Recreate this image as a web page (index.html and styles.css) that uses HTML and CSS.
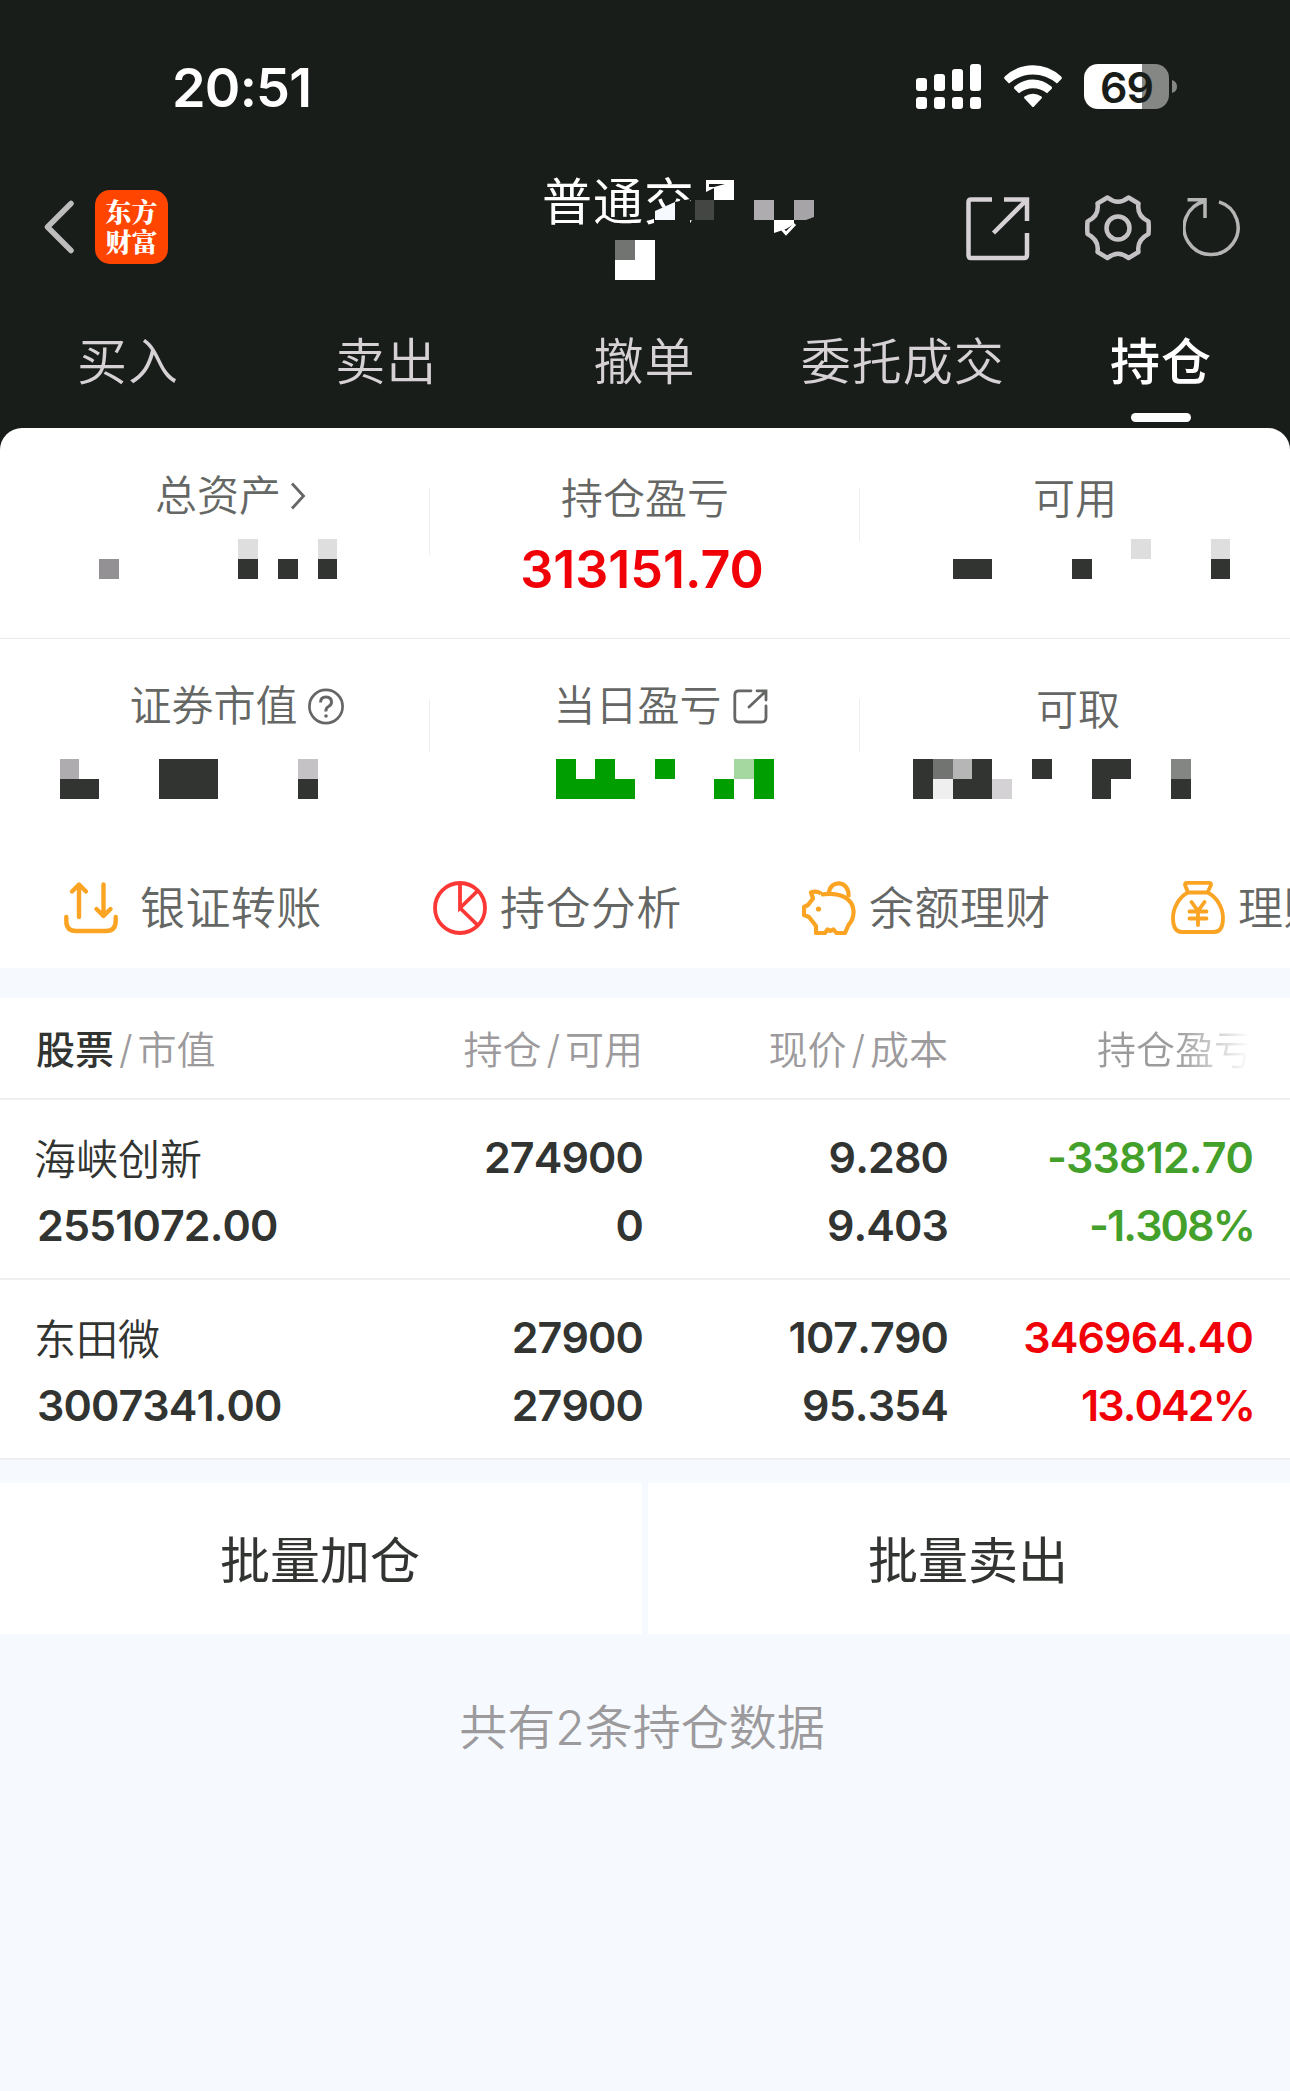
FILE: index.html
```html
<!DOCTYPE html>
<html lang="zh-CN">
<head>
<meta charset="utf-8">
<title>持仓</title>
<link rel="stylesheet" href="styles.css">
</head>
<body>
<header class="top">
  <div class="status">
    <span class="clock">20:51</span>
    <div class="status-icons">
      <svg width="65" height="45" viewBox="0 0 65 45" fill="#fff"><rect x="0" y="14" width="11" height="13" rx="3"/><rect x="18" y="10" width="11" height="17" rx="3"/><rect x="36" y="5" width="11" height="22" rx="3"/><rect x="54" y="0" width="11" height="27" rx="3"/><rect x="0" y="33" width="11" height="12" rx="3"/><rect x="18" y="33" width="11" height="12" rx="3"/><rect x="36" y="33" width="11" height="12" rx="3"/><rect x="54" y="33" width="11" height="12" rx="3"/></svg>
      <svg class="wifi" width="58" height="45" viewBox="0 0 58 45" fill="#fff"><path d="M.8 12.500Q13 1.200 29 1.200T57.200 12.500Q58.500 14 57.200 15.200L53 19.400Q42 10.400 29 10.400T5 19.400L.8 15.200Q-.5 14 .8 12.500Z"/><path d="M10.500 22.500Q19 15.400 29 15.400T47.500 22.500Q48.500 24 47.500 25L43 29.300Q36.500 24.300 29 24.300T15 29.300L10.500 25Q9.500 24 10.500 22.500Z"/><path d="M20.500 32.500Q24.500 29.700 29 29.700T37.500 32.500Q38.500 33.500 37.500 34.500L30 42.500Q29 43.500 28 42.500L20.500 34.500Q19.500 33.500 20.500 32.500Z"/></svg>
      <div class="battery"><span>69</span></div>
      <svg width="7" height="45" viewBox="0 0 7 45"><path d="M1 16Q6 17.500 6 22.500T1 29Z" fill="#848784"/></svg>
    </div>
  </div>
  <div class="nav">
    <svg width="30" height="54" viewBox="0 0 30 54" fill="none" stroke="#bdbdbd" stroke-width="5.500" stroke-linecap="round" stroke-linejoin="round"><path d="M27 3.500L3.500 27 27 50.500"/></svg>
    <div class="logo">东方<br>财富</div>
    <div class="title">普通交
      <svg class="title-mask" width="280" height="140" viewBox="500 160 280 140" >
        <path d="M654 212L675 202 690 199V230H654Z" fill="#191d1a"/>
        <path d="M655 211L675 202V220H655Z" fill="#f6faff"/>
        <path d="M695 200H714V220H695Z" fill="#434643"/>
        <path d="M706 180H734V200H714V188L706 192Z" fill="#fff"/><path d="M709 184H725L714 187H709Z" fill="#191d1a"/>
        <path d="M754 200H774V220H754Z" fill="#aeacaf"/>
        <path d="M615 240H655V280H615Z" fill="#fff"/><path d="M615 240H635V260H615Z" fill="#727472"/>
      </svg>
      <svg class="title-mask2" width="42" height="40" viewBox="773 200 42 40"><path d="M794 200H814V217L806 220H794Z" fill="#a6a4a7"/><path d="M774 220H794V224L786 229 774 233Z" fill="#fff"/><path d="M782 229L786 233.500 795 224" fill="none" stroke="#fff" stroke-width="3"/></svg>
    </div>
    <div class="tools">
      <svg width="64" height="64" viewBox="0 0 64 64" fill="none" stroke="#d5d1d5" stroke-width="4.500"><path d="M26 2.500H5Q2.500 2.500 2.500 5V58Q2.500 61 5 61H58Q61 61 61 58V36M38 2.500H61V24M60 3.500L27.500 36"/></svg>
      <svg class="gear" width="66" height="66" viewBox="0 0 66 66" fill="none" stroke="#c5c2c5" stroke-width="4.500" stroke-linejoin="round"><circle cx="33" cy="33" r="11.500"/><path d="M22.500 2.500Q33 11 43.500 2.500L53.500 8.500Q51.500 21 63.500 26.500Q64 33 63.500 39Q51.500 45 53.500 57L43.500 63Q33 54.500 22.500 63L12.500 57Q14.500 45 2.500 39Q2 33 2.500 26.500Q14.500 21 12.500 8.500Z"/></svg>
      <svg width="60" height="60" viewBox="0 0 60 60" fill="none" stroke="#b5b5b5" stroke-width="3.500"><path d="M36 4.800A27 27 0 1 1 22 4.300M4.500 2.800H22V21"/></svg>
    </div>
  </div>
  <nav class="tabs"><span>买入</span><span>卖出</span><span>撤单</span><span>委托成交</span><span class="on">持仓</span></nav>
</header>

<section class="card">
  <div class="cells">
    <div class="cell tall"><div class="label up linked">总资产<svg class="chev" width="16" height="28" viewBox="0 0 16 28" fill="none" stroke="#656765" stroke-width="2.800"><path d="M2 1.500L13.500 14 2 26.500"/></svg></div>
      <svg class="mosaic" viewBox="0 539 430 40" fill="#313431"><path fill="#949194" d="M99 559h20v20h-20z"/><path fill="#dedede" d="M238 539h20v20h-20zM318 539h19v20h-19z"/><path d="M238 559h20v20h-20zM278 559h20v20h-20zM318 559h19v20h-19z"/></svg></div>
    <div class="cell"><div class="label">持仓盈亏</div><div class="total">313151.70</div></div>
    <div class="cell"><div class="label">可用</div>
      <svg class="mosaic" viewBox="860 539 430 40" fill="#313431"><path d="M953 559h39v20h-39zM1072 559h20v20h-20zM1211 559h19v20h-19z"/><path fill="#dedede" d="M1131 539h20v20h-20zM1211 539h19v20h-19z"/></svg></div>
  </div>
  <div class="cells second">
    <div class="cell"><div class="label up shift">证券市值<svg class="help" width="36" height="37" viewBox="0 0 36 37" fill="none" stroke="#656765" stroke-width="2.700"><circle cx="18" cy="18.500" r="16.600"/><path d="M12.500 14.500Q12.500 9 18 9T23.500 14Q23.500 17 20.500 18.500T18 23.500" stroke-width="3"/><circle cx="18" cy="28" r="1.800" fill="#656765" stroke="none"/></svg></div>
      <svg class="mosaic" viewBox="0 759 430 40" fill="#313431"><path fill="#aeacaf" d="M60 759h19v20h-19z"/><path d="M60 779h39v20h-39zM159 759h59v40h-59zM298 779h20v20h-20z"/><path fill="#c5c2c5" d="M298 759h20v20h-20z"/></svg></div>
    <div class="cell"><div class="label up linked">当日盈亏<svg class="ext" width="35" height="35" viewBox="0 0 35 35" fill="none" stroke="#656765" stroke-width="2.800" stroke-linecap="round"><path d="M18 1.800H6Q1.800 1.800 1.800 6V28.500Q1.800 33 6 33H28.500Q33 33 33 28.500V17M24 1.800H33V11M33 2L16 18"/></svg></div>
      <svg class="mosaic" viewBox="430 759 430 40" fill="#009e00"><path d="M556 759h20v20h19v-20h20v20h20v20h-79zM655 759h20v20h-20zM714 779h20v20h-20zM754 759h20v40h-20z"/><path fill="#a5d8a0" d="M734 759h20v20h-20z"/></svg></div>
    <div class="cell"><div class="label low">可取</div>
      <svg class="mosaic" viewBox="860 759 430 40" fill="#313431"><path d="M913 759h20v40h-20zM953 779h19v-20h20v40h-39zM1032 759h20v20h-20zM1092 759h39v20h-20v20h-19zM1171 779h20v20h-20z"/><path fill="#727472" d="M933 759h20v20h-20z"/><path fill="#b6b6b6" d="M953 759h19v20h-19z"/><path fill="#efefef" d="M933 779h20v20h-20z"/><path fill="#d5d2d5" d="M992 779h20v20h-20z"/><path fill="#848684" d="M1171 759h20v20h-20z"/></svg></div>
  </div>
  <div class="actions">
    <div class="action wide"><svg width="54" height="54" viewBox="0 0 54 54" fill="none" stroke="#fba423" stroke-width="4.400" stroke-linecap="round" stroke-linejoin="round"><path d="M2.300 36V40Q2.300 50 12 50H42Q51.700 50 51.700 40V36M15 36V4M8 10.500L15 3.500 22 10.500M39.500 3.500V34M32.500 28L39.500 35 46.500 28"/></svg>银证转账</div>
    <div class="action"><svg width="54" height="54" viewBox="0 0 54 54" fill="none" stroke="#fb3835" stroke-width="3.800"><circle cx="27" cy="27" r="25"/><path d="M27 2V27L45 9.500M27 27L45 44.500"/></svg>持仓分析</div>
    <div class="action"><svg width="54" height="54" viewBox="0 0 54 54" fill="none" stroke="#fba423" stroke-width="4.200" stroke-linejoin="round"><path d="M27 12.500C27 -1.500 48 -1.500 46.500 16M19 12.500Q14 9.500 9 11.500L11 17.500 6 24 2 26V34L7 36 14 45V52H23L25.500 48.500 28 50 31.500 48.500 34.500 52H43L46.500 44Q52 38 51.500 30C51 18 39 10.500 19 13.500"/><circle cx="16.500" cy="28" r="2.600" fill="#fba423" stroke="none"/></svg>余额理财</div>
    <div class="action"><svg width="54" height="54" viewBox="0 0 54 54" fill="none" stroke="#fba423" stroke-width="3.800" stroke-linejoin="round" stroke-linecap="round"><path d="M17 11.500L14 4Q14 1.800 16 1.800H38Q40 1.800 40 4L36.500 11.500ZM17 11.500C8 16 2 27 2 37Q2 51 11 51H43Q52 51 52 37C52 27 46 16 36.500 11.500M20.500 21L27 30 33.500 21M18.500 30.500H35.500M18.500 37.500H35.500M27 30V44"/></svg>理财</div>
  </div>
</section>

<section class="table">
  <div class="row head"><div><b>股票</b><i>/</i>市值</div><div>持仓<i>/</i>可用</div><div>现价<i>/</i>成本</div><div class="fade">持仓盈亏</div></div>
  <div class="row"><div><span class="name">海峡创新</span><span>2551072.00</span></div><div><span>274900</span><span>0</span></div><div><span>9.280</span><span>9.403</span></div><div class="green"><span>-33812.70</span><span class="pct">-1.308%</span></div></div>
  <div class="row"><div><span class="name">东田微</span><span>3007341.00</span></div><div><span>27900</span><span>27900</span></div><div><span>107.790</span><span>95.354</span></div><div class="red"><span>346964.40</span><span class="pct">13.042%</span></div></div>
</section>
<div class="buttons"><div>批量加仓</div><div>批量卖出</div></div>
<p class="foot">共有2条持仓数据</p>
</body>
</html>
```
FILE: styles.css
```css
* { box-sizing: border-box; }
body { margin: 0; width: 1290px; min-height: 2091px; background: #f6faff; font-family: "Inter", "Noto Sans CJK SC", sans-serif; color: #313431; overflow-x: hidden; }
svg { display: block; flex: none; }
.top { background: #191d1a; height: 450px; color: #fff; }
.status { height: 174px; padding: 57px 112px 0 172px; display: flex; justify-content: space-between; }
.clock { padding-top: 1px; font-size: 54px; line-height: 60px; font-weight: 600; letter-spacing: -.8px; }
.status-icons { display: flex; padding-top: 7px; }
.wifi { margin: 0 22px 0 23px; }
.battery { width: 85px; height: 45px; margin-right: 2px; border-radius: 14px; background: linear-gradient(90deg, #fff 58px, #848784 58px); color: #191d1a; font-size: 43px; line-height: 46px; font-weight: 600; text-align: center; letter-spacing: -1px; }
.nav { height: 126px; display: flex; padding-left: 44px; }
.nav > svg { margin-top: 26px; }
.logo { width: 73px; height: 74px; margin: 16px 0 0 21px; padding-top: 6px; border-radius: 15px; background: #ff4500; text-align: center; font-family: "Noto Serif CJK SC", "Noto Sans CJK SC", sans-serif; font-weight: 900; font-size: 26px; line-height: 30px; }
.title { position: relative; margin-left: 374px; width: 424px; font-size: 50px; line-height: 56px; font-weight: 400; letter-spacing: 1px; white-space: nowrap; }
.title-mask { position: absolute; left: -42px; top: -14px; }
.title-mask2 { position: absolute; left: 231px; top: 26px; }
.tools { display: flex; padding-top: 23px; }
.gear { margin: -2px 32px 0 55px; }
.tabs { display: grid; grid-template-columns: repeat(5, 1fr); height: 128px; padding-top: 30px; font-size: 50px; line-height: 64px; font-weight: 350; letter-spacing: 1px; color: #d5d1d5; text-align: center; margin-left: -1px; }
.tabs .on { color: #fff; font-weight: 500; }
.tabs .on::after { content: ""; display: block; width: 60px; height: 9px; margin: 19px auto 0; border-radius: 5px; background: #fff; }
.card { position: relative; margin-top: -22px; height: 540px; background: #fff; border-radius: 22px 22px 0 0; overflow: hidden; }
.cells { display: grid; grid-template-columns: repeat(3, 430px); height: 211px; border-bottom: 1px solid #ebebeb; }
.second { border: 0; }
.cell { display: flex; flex-direction: column; background: linear-gradient(#eee, #eee) right 60px / 1px 53px no-repeat; padding-top: 50px; height: 190px; }
.tall { background-size: 1px 67px; }
.cell:last-child { background: none; }
.label { flex: none; display: flex; justify-content: center; align-items: center; height: 41px; margin-bottom: -1px; font-size: 42px; line-height: 40px; font-weight: 350; color: #656765; }
.up { height: 36px; margin-bottom: 4px; }
.second .up { height: 34px; margin-bottom: 6px; }
.low { padding-left: 6px; }
.chev { margin-left: 9px; }
.help { margin-left: 10px; }
.ext { margin-left: 11px; }
.shift { padding-left: 43px; }
.linked { padding-left: 31px; }
.mosaic { width: 430px; height: 40px; margin-top: 21px; }
.second .mosaic { margin-top: 30px; }
.total { margin-top: 22px; color: #f10008; font-size: 52px; line-height: 60px; font-weight: 600; text-align: center; padding-right: 6px; }
.actions { display: flex; height: 118px; padding: 31px 0 0 64px; }
.action { width: 369px; flex: none; display: flex; gap: 13px; font-size: 45px; line-height: 56px; font-weight: 350; letter-spacing: .4px; color: #656765; white-space: nowrap; }
.wide { gap: 22px; }
.table { margin-top: 30px; background: #fff; }
.row { display: grid; grid-template-columns: 341px 265px 305px 305px; padding: 23px 37px 0 37px; height: 180px; border-bottom: 2px solid #efefef; font-size: 43px; line-height: 68px; font-weight: 600; letter-spacing: -.9px; font-kerning: none; text-align: right; }
.row > div:first-child { text-align: left; }
.row span { display: block; }
.row .name { margin-left: -3px; padding-top: 3px; margin-bottom: -3px; font-size: 42px; font-weight: 350; letter-spacing: 0; }
.row .pct { letter-spacing: -1.9px; margin-right: -1px; }
.head { height: 102px; padding-top: 22px; font-size: 39px; line-height: 60px; font-weight: 350; letter-spacing: 0; color: #9c9a9c; }
.head b { font-weight: 500; color: #313431; margin-left: -1px; }
.head i { font-style: normal; margin: 0 5px; }
.fade { background: linear-gradient(90deg, #9c9a9c 75%, #fff 99%); -webkit-background-clip: text; background-clip: text; color: transparent; }
.green { color: #43a02a; }
.red { color: #f10008; }
.buttons { display: grid; grid-template-columns: 1fr 1fr; gap: 6px; margin-top: 23px; }
.buttons div { height: 151px; background: #fff; font-size: 50px; line-height: 156px; text-align: center; padding-right: 2px; }
.foot { margin: 61px 6px 0 0; font-size: 48px; line-height: 66px; font-weight: 350; color: #9c9a9c; text-align: center; }
```
